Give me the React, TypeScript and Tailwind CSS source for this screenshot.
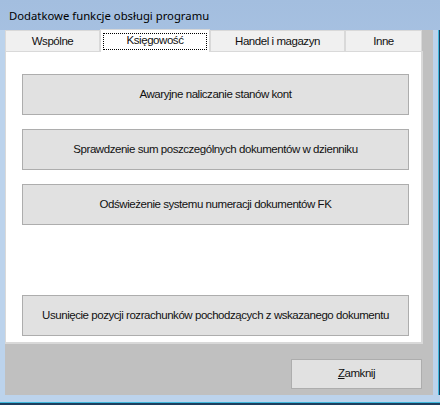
import React from "react";

const actions = [
  { label: "Awaryjne naliczanie stanów kont", top: "mt-[22px]" },
  { label: "Sprawdzenie sum poszczególnych dokumentów w dzienniku", top: "mt-[14px]" },
  { label: "Odświeżenie systemu numeracji dokumentów FK", top: "mt-[14px]" },
  { label: "Usunięcie pozycji rozrachunków pochodzących z wskazanego dokumentu", top: "mt-[70px]" },
];

const tabs = [
  { label: "Wspólne", w: "w-[95px]" },
  { label: "Księgowość", w: "w-[110px]", active: true },
  { label: "Handel i magazyn", w: "w-[135px]" },
  { label: "Inne", w: "w-[77px]" },
];

const txt = "text-[11.5px] tracking-[-0.45px] text-[#111]";

function ActionButton({ label, top }: { label: string; top: string }) {
  return (
    <button
      className={`${top} ml-[16px] w-[387px] h-[41px] bg-[#e1e1e1] border border-[#adadad] ${txt} flex items-center justify-center`}
    >
      {label}
    </button>
  );
}

export default function App() {
  return (
    <div
      className="w-[440px] h-[405px] flex flex-col bg-gradient-to-b from-[#a3bedf] via-[#b6cdea] to-[#bcd3ec] overflow-hidden"
      style={{ fontFamily: '"Liberation Sans", Arial, sans-serif' }}
    >
      <div className="h-[30px] flex items-center pl-[9px] pt-[2px] text-[11.3px] text-black" style={{ fontFamily: '"Noto Sans", sans-serif' }}>
        Dodatkowe funkcje obsługi programu
      </div>
      <div className="flex">
        <div className="w-[5px] bg-[#bcd3ec]" />
        <div className="w-[428px] h-[365px] bg-[#c0c0c0] flex flex-col">
          <div className="w-[418px] h-[314px] flex flex-col">
            <div className="flex h-[21px] items-end">
              {tabs.map((t) =>
                t.active ? (
                  <div
                    key={t.label}
                    className={`${t.w} h-[23px] -mb-px relative z-10 bg-white border border-b-0 border-[#d9d9d9] flex items-center justify-center ${txt}`}
                  >
                    <span className="w-[104px] h-[17px] border border-dotted border-black flex items-center justify-center">{t.label}</span>
                  </div>
                ) : (
                  <div
                    key={t.label}
                    className={`${t.w} h-[21px] bg-[#f0f0f0] border border-b-0 border-[#d9d9d9] flex items-center justify-center pt-px ${txt}`}
                  >
                    {t.label}
                  </div>
                )
              )}
            </div>
            <div className="flex-1 bg-white border border-[#d9d9d9] border-r-2 border-b-2 flex flex-col">
              {actions.map((a) => (
                <ActionButton key={a.label} label={a.label} top={a.top} />
              ))}
            </div>
          </div>
          <div className="flex justify-end pr-[11px] mt-[15px]">
            <button className={`w-[131px] h-[30px] bg-[#e1e1e1] border border-[#adadad] ${txt} flex items-center justify-center`}>
              <span>
                <span className="underline">Z</span>amknij
              </span>
            </button>
          </div>
        </div>
        <div className="w-[5px] bg-[#bcd3ec]" />
        <div className="w-px bg-[#3fb8dc]" />
        <div className="w-px bg-[#1f3f5f]" />
      </div>
      <div className="h-[7px] bg-[#bcd3ec]" />
      <div className="h-px bg-[#3fb8dc]" />
      <div className="flex-1 bg-[#1f3f5f]" />
    </div>
  );
}
